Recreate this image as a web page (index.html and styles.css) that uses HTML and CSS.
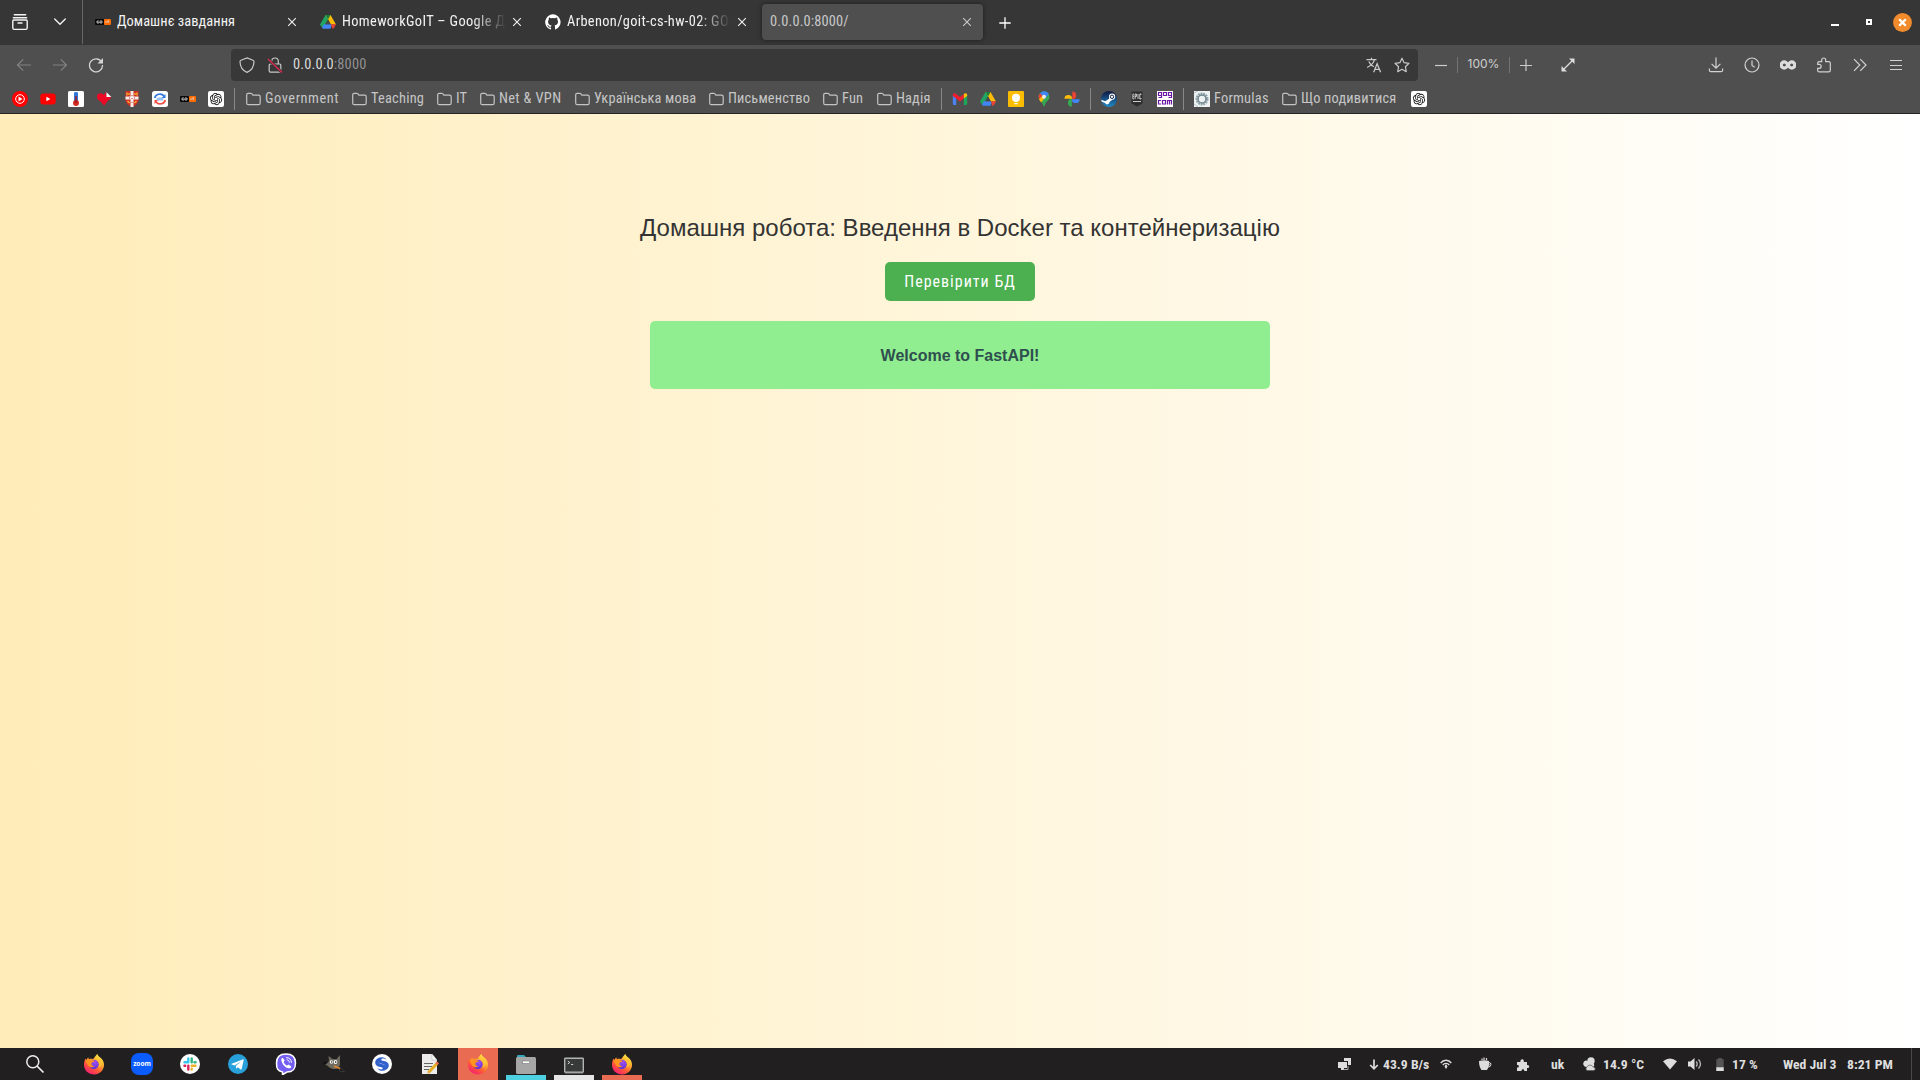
FILE: index.html
```html
<!DOCTYPE html>
<html lang="uk">
<head>
<meta charset="utf-8">
<title>0.0.0.0:8000/</title>
<link rel="stylesheet" href="styles.css">
</head>
<body>
<svg class="sprite" aria-hidden="true">
  <defs>
    <linearGradient id="ff-body" x1=".85" y1="0" x2=".2" y2="1">
      <stop offset="0" stop-color="#fff44f"/><stop offset=".35" stop-color="#ffb02e"/><stop offset=".65" stop-color="#ff5a36"/><stop offset="1" stop-color="#f5157a"/>
    </linearGradient>
    <radialGradient id="ff-globe" cx=".6" cy=".3" r=".8">
      <stop offset="0" stop-color="#a04df5"/><stop offset="1" stop-color="#5331c7"/>
    </radialGradient>
    <linearGradient id="steam-bg" x1="0" y1="0" x2="0" y2="1">
      <stop offset="0" stop-color="#10173f"/><stop offset="1" stop-color="#1f8ac6"/>
    </linearGradient>
    <symbol id="firefox" viewBox="0 0 22 22">
      <path d="M14.3.8c.4 1.700 1.500 2.600 2.600 3.500 2.600 1.900 4.100 4.300 4.100 7.400 0 5.500-4.400 9.700-10 9.700S1 17.200 1 11.700c0-2.400.6-4.500 1.700-6.200l.5 1.600L5.200 4.300l.7 1.900c1.400-.5 2.800-.5 4.100.1 1.400-1.700 2.900-3.500 4.300-5.500z" fill="url(#ff-body)"/>
      <circle cx="11" cy="11.500" r="4.700" fill="url(#ff-globe)"/>
      <path d="M2.700 7.500c1.400-1.600 4.100-1.800 6.200-.3 1.500.1 2.700.4 3.100.9-.7 1-2.900 1-3.500 2-.3 1.700.8 3 2.700 3.200-2.200 1.800-5.700.7-6.600-1.900-.7-.6-1.500-2-1.900-3.900z" fill="#ff9320"/>
      <path d="M12.300 6.500c4.200.5 5.500 5.200 2.700 8 2.300-.3 4-2.700 3.500-5.500-.7-2.500-2.800-3.900-6.200-2.500z" fill="#ffc336"/>
    </symbol>
    <symbol id="drive" viewBox="0 0 16 16">
      <path d="M5.500 1h2.700v4.200L4 12.500l-2 1L0 10.500z" fill="#1fa463"/><path d="M5.500 1h5L16 10.500h-5.200z" fill="#fbbc04"/><path d="M5.500 1h5L8 5.400z" fill="#188038"/><path d="M3.900 10.300H12l-1.500 4.500H3.500q-1 0-1.500-1z" fill="#4285f4"/><path d="M10.800 10.300H16l-2 3.700q-.6.800-1.500.8z" fill="#ea4335"/><path d="M8 5.400l2.800 4.900H5.200z" fill="#484848"/>
    </symbol>
    <symbol id="openai" viewBox="0 0 16 16">
      <rect width="16" height="16" rx="2" fill="#fff"/>
      <path transform="translate(1.900 1.900) scale(.51)" fill="#111" d="M22.2819 9.8211a5.9847 5.9847 0 0 0-.5157-4.9108 6.0462 6.0462 0 0 0-6.5098-2.9A6.0651 6.0651 0 0 0 4.9807 4.1818a5.9847 5.9847 0 0 0-3.9977 2.9 6.0462 6.0462 0 0 0 .7427 7.0966 5.98 5.98 0 0 0 .511 4.9107 6.051 6.051 0 0 0 6.5146 2.9001A5.9847 5.9847 0 0 0 13.2599 24a6.0557 6.0557 0 0 0 5.7718-4.2058 5.9894 5.9894 0 0 0 3.9977-2.9001 6.0557 6.0557 0 0 0-.7475-7.0729zm-9.022 12.6081a4.4755 4.4755 0 0 1-2.8764-1.0408l.1419-.0804 4.7783-2.7582a.7948.7948 0 0 0 .3927-.6813v-6.7369l2.02 1.1686a.071.071 0 0 1 .038.052v5.5826a4.504 4.504 0 0 1-4.4945 4.4944zm-9.6607-4.1254a4.4708 4.4708 0 0 1-.5346-3.0137l.142.0852 4.783 2.7582a.7712.7712 0 0 0 .7806 0l5.8428-3.3685v2.3324a.0804.0804 0 0 1-.0332.0615L9.74 19.9502a4.4992 4.4992 0 0 1-6.1408-1.6464zM2.3408 7.8956a4.485 4.485 0 0 1 2.3655-1.9728V11.6a.7664.7664 0 0 0 .3879.6765l5.8144 3.3543-2.0201 1.1685a.0757.0757 0 0 1-.071 0l-4.8303-2.7865A4.504 4.504 0 0 1 2.3408 7.872zm16.5963 3.8558L13.1038 8.364 15.1192 7.2a.0757.0757 0 0 1 .071 0l4.8303 2.7913a4.4944 4.4944 0 0 1-.6765 8.1042v-5.6772a.79.79 0 0 0-.407-.667zm2.0107-3.0231l-.142-.0852-4.7735-2.7818a.7759.7759 0 0 0-.7854 0L9.409 9.2297V6.8974a.0662.0662 0 0 1 .0284-.0615l4.8303-2.7866a4.4992 4.4992 0 0 1 6.6802 4.66zM8.3065 12.863l-2.02-1.1638a.0804.0804 0 0 1-.038-.0567V6.0742a4.4992 4.4992 0 0 1 7.3757-3.4537l-.142.0805L8.704 5.459a.7948.7948 0 0 0-.3927.6813zm1.0976-2.3654l2.602-1.4998 2.6069 1.4998v2.9994l-2.5974 1.4997-2.6067-1.4997Z"/>
    </symbol>
    <symbol id="goit" viewBox="0 0 16 16">
      <rect y="5" width="9" height="6" rx="1" fill="#080808"/><rect x="9" y="5" width="7" height="6" rx="1" fill="#ff6c00"/>
      <path d="M2 7h2M2 7v2h2V8M5 7h2v2H5zM11 7v2M12.200 7h2M13.200 7v2" fill="none" stroke="#ddd" stroke-width=".8"/>
    </symbol>
    <symbol id="folder" viewBox="0 0 15 16">
      <path d="M.7 12V3.700q0-1.400 1.400-1.400h2.600q.6 0 1 .4l1.200 1.400h5.700q1.600 0 1.600 1.600V12q0 1.600-1.600 1.600H2.300Q.7 13.600.7 12z" fill="none" stroke="#c4c4c4" stroke-width="1.200"/>
    </symbol>
    <symbol id="close" viewBox="0 0 10 10"><path d="M1.200 1.200l7.600 7.600M8.800 1.200L1.200 8.800" stroke="currentColor" stroke-width="1.100"/></symbol>
  </defs>
</svg>

<header class="browser">
  <div class="tabbar">
    <div class="tab-tools">
      <svg class="i18" viewBox="0 0 18 18"><path d="M3.300 1.800h11.400M2.300 4.700h13.400M2.800 7h12.400q1 0 1 1v7q0 1.400-1.400 1.400H3.200Q1.800 16.400 1.800 15V8q0-1 1-1zM7 10h4" fill="none" stroke="#f4f4f4" stroke-width="1.400" stroke-linecap="round"/></svg>
      <svg class="chev" viewBox="0 0 12 8"><path d="M.7 1l5.300 5.300L11.300 1" fill="none" stroke="#f4f4f4" stroke-width="1.300" stroke-linecap="round"/></svg>
    </div>
    <div class="tab">
      <svg class="i16"><use href="#goit"/></svg>
      <span class="tab-title t1">Домашнє завдання</span>
      <svg class="x"><use href="#close"/></svg>
    </div>
    <div class="tab">
      <svg class="i16"><use href="#drive"/></svg>
      <span class="tab-title fade t2 lat">HomeworkGoIT – Google Диск</span>
      <svg class="x"><use href="#close"/></svg>
    </div>
    <div class="tab">
      <svg class="i16" viewBox="0 0 16 16"><path d="M8 .3a7.800 7.800 0 0 0-2.500 15.200c.4.100.5-.2.500-.4v-1.500c-2.100.5-2.600-.9-2.600-.9-.4-.9-.9-1.100-.9-1.100-.7-.5.100-.5.100-.5.800.1 1.200.8 1.200.8.700 1.200 1.800.9 2.300.7.100-.5.300-.9.500-1.100-1.700-.2-3.500-.9-3.500-3.900 0-.8.300-1.500.8-2.100-.1-.2-.3-1 .1-2 0 0 .6-.2 2.100.8a7.300 7.300 0 0 1 3.900 0c1.500-1 2.100-.8 2.100-.8.400 1 .2 1.800.1 2 .5.600.8 1.300.8 2.100 0 3-1.800 3.700-3.500 3.900.3.200.5.700.5 1.400v2.100c0 .2.100.5.500.4A7.800 7.800 0 0 0 8 .3z" fill="#fff"/></svg>
      <span class="tab-title fade t3 lat">Arbenon/goit-cs-hw-02: GOIT</span>
      <svg class="x"><use href="#close"/></svg>
    </div>
    <div class="tab active">
      <span class="tab-title t4">0.0.0.0:8000/</span>
      <svg class="x"><use href="#close"/></svg>
    </div>
    <svg class="plus" viewBox="0 0 12 12"><path d="M6 .3v11.400M.3 6h11.400" stroke="#fff" stroke-width="1.300"/></svg>
    <div class="win">
      <svg class="w8" viewBox="0 0 8 8"><path d="M0 7h8" stroke="#fff" stroke-width="2"/></svg>
      <svg class="w6" viewBox="0 0 6 6"><path d="M1 1h4v4H1z" fill="none" stroke="#fff" stroke-width="2"/></svg>
      <svg class="w19" viewBox="0 0 19 19"><circle cx="9.500" cy="9.500" r="9.400" fill="#f28b2c"/><path d="M6.200 6.200l6.600 6.600M12.800 6.200l-6.600 6.600" stroke="#fff" stroke-width="2.300"/></svg>
    </div>
  </div>

  <div class="navbar">
    <div class="nav-left">
      <svg class="i16 dim" viewBox="0 0 16 16"><path d="M15 8H1.500M7.200 2.300L1.500 8l5.700 5.700" fill="none" stroke="currentColor" stroke-width="1.200"/></svg>
      <svg class="i16 dim" viewBox="0 0 16 16"><path d="M1 8h13.500M8.800 2.300L14.500 8l-5.700 5.700" fill="none" stroke="currentColor" stroke-width="1.200"/></svg>
      <svg class="i16" viewBox="0 0 16 16"><path d="M13.700 5.200A6.500 6.500 0 1 0 14.500 8" fill="none" stroke="#d5d5d5" stroke-width="1.300"/><path d="M15 1v5.500H9.500z" fill="#d5d5d5"/></svg>
    </div>
    <div class="urlbar">
      <svg class="i16" viewBox="0 0 16 16"><path d="M8 .9l6 2.300c.8.300 1 .7 1 1.400-.1 5-2.200 8.900-7 10.800C3.200 13.500 1.100 9.600 1 4.600c0-.7.200-1.100 1-1.400z" fill="none" stroke="#c8c8c8" stroke-width="1.200"/></svg>
      <svg class="i16 lock" viewBox="0 0 16 16"><path d="M4.700 7V4.300a3.300 3.300 0 0 1 6.600 0V7M3.200 7h9.600q1 0 1 1v6q0 1.200-1.200 1.200H3.400q-1.200 0-1.200-1.200V8q0-1 1-1z" fill="none" stroke="#c8c8c8" stroke-width="1.200"/><path d="M1 2l14 13.500" stroke="#383838" stroke-width="3"/><path d="M1 2l14 13.500" stroke="#e22850" stroke-width="1.300"/></svg>
      <span class="url">0.0.0.0<span class="port">:8000</span></span>
      <svg class="i16 translate" viewBox="0 0 16 16"><path d="M.5 2.700h10M5.500.8v1.900M8.500 2.700c-.8 3.100-3.500 6-7.400 7.800M2.800 4.500c1 2.300 2.700 4 5 5.300M7.700 15.200l3.400-8.500 3.500 8.500M8.900 12.400h4.600" fill="none" stroke="#c8c8c8" stroke-width="1.300"/></svg>
      <svg class="i16" viewBox="0 0 16 16"><path d="M8 1.200l2.100 4.500 4.900.6-3.600 3.400.9 5L8 12.300l-4.300 2.400.9-5L1 6.300l4.900-.6z" fill="none" stroke="#c8c8c8" stroke-width="1.200" stroke-linejoin="round"/></svg>
    </div>
    <div class="zoom">
      <svg class="z12" viewBox="0 0 12 12"><path d="M0 6.500h12" stroke="#ccc" stroke-width="1.200"/></svg>
      <i class="sep"></i>
      <span class="pct">100%</span>
      <i class="sep"></i>
      <svg class="z12" viewBox="0 0 12 12"><path d="M6 .3v11.700M0 6.500h12" stroke="#ccc" stroke-width="1.200"/></svg>
    </div>
    <svg class="expand" viewBox="0 0 14 14"><path d="M3 11l8-8" stroke="#ddd" stroke-width="1.300"/><path d="M8 .5h5.500V6zM.5 8v5.500H6z" fill="#ddd"/></svg>
    <div class="nav-right">
      <svg class="i16" viewBox="0 0 16 16"><path d="M8 .5v10.500M3.600 6.800L8 11.200l4.400-4.400M1.400 11.500v1.700q0 1.500 1.500 1.500h10.200q1.500 0 1.500-1.500v-1.700" fill="none" stroke="#d2d2d2" stroke-width="1.200"/></svg>
      <svg class="i16" viewBox="0 0 16 16"><circle cx="8" cy="8" r="7" fill="none" stroke="#d2d2d2" stroke-width="1.200"/><path d="M8 3.500v5l2.700 1.800" fill="none" stroke="#d2d2d2" stroke-width="1.200"/></svg>
      <svg class="i16" viewBox="0 0 16 16"><path d="M8 8C6.600 5.800 5.600 4.900 4.300 4.900a3 3 0 0 0 0 6.200C5.600 11.100 6.600 10.200 8 8s2.400-3.100 3.700-3.100a3 3 0 0 1 0 6.200C10.400 11.100 9.400 10.200 8 8z" fill="none" stroke="#ddd" stroke-width="3.200"/></svg>
      <svg class="i16" viewBox="0 0 16 16"><path d="M5.700 4.700V3a2 2 0 0 1 4 0v1.700h3q1.600 0 1.600 1.600v7q0 1.600-1.600 1.600H3.200q-1.500 0-1.500-1.500v-2.100h1.500a2 2 0 0 0 0-4H1.700V6.200q0-1.500 1.500-1.500z" fill="none" stroke="#d2d2d2" stroke-width="1.200"/></svg>
      <svg class="i16" viewBox="0 0 16 16"><path d="M2 2.200L7.800 8 2 13.800M8.200 2.200L14 8l-5.800 5.800" fill="none" stroke="#d2d2d2" stroke-width="1.200"/></svg>
      <svg class="i16" viewBox="0 0 16 16"><path d="M2 3.500h12M2 8.500h12M2 12.500h12" stroke="#d2d2d2" stroke-width="1.200"/></svg>
    </div>
  </div>

  <nav class="bookmarks">
    <div class="favs">
      <svg class="i16" viewBox="0 0 16 16"><circle cx="8" cy="8" r="8" fill="#f00"/><circle cx="8" cy="8" r="4.300" fill="none" stroke="#fff"/><path d="M6.500 5.500v5l4-2.500z" fill="#fff"/></svg>
      <svg class="i16" viewBox="0 0 16 16"><rect x=".3" y="2.500" width="15.400" height="11" rx="3" fill="#f00"/><path d="M6.400 5.700v4.600l4-2.300z" fill="#fff"/></svg>
      <svg class="i16" viewBox="0 0 16 16"><rect width="16" height="16" rx="1.500" fill="#fff"/><path d="M6 2q0-1 2-1t2 1v8H6z" fill="#3178d8"/><circle cx="8" cy="12" r="3" fill="#d22d20"/><path d="M8 5v7" stroke="#a21420" stroke-width="1.500"/></svg>
      <svg class="i16" viewBox="0 0 16 16"><path d="M1 5.500C1 2 5 1 8 4c.5-1.800 1.800-2.500 2.500-2.500V6H15c0 2-2 2.700-3 3.500L8.200 14.500 4 10C2 9 1 7.800 1 5.500z" fill="#ee0a25"/><path d="M10.500 1.200L15.300 6h-4.800z" fill="#fff"/></svg>
      <svg class="i16" viewBox="0 0 16 16"><path d="M1.500 0h13v9q0 4.500-6.500 7-6.500-2.500-6.500-7z" fill="#cf2f28"/><path d="M8 0v16M1.500 7h13" stroke="#f6ede9" stroke-width="3"/><path d="M3 1.500v3M5 2v2M11 2v2M13 1.500v3M3.500 10l2 2M12.500 10l-2 2" stroke="#f0b92c" stroke-width="1.300"/><path d="M8 4v1M8 7v1M8 11v1M5 7h1M10 7h1" stroke="#bb3b4c"/></svg>
      <svg class="i16" viewBox="0 0 16 16"><rect width="16" height="16" rx="2.500" fill="#fff"/><path d="M2.800 7C3.500 2.800 9.500 1.800 12 5" fill="none" stroke="#3476dc" stroke-width="1.700"/><path d="M13.500 3v4H9.500z" fill="#3476dc"/><path d="M13.200 9C12.500 13.200 6.500 14.200 4 11" fill="none" stroke="#ef5147" stroke-width="1.700"/><path d="M2.500 13V9h4z" fill="#ef5147"/><rect x="4.500" y="6.500" width="7" height="3" rx="1.500" fill="#9bc2f7"/></svg>
      <svg class="i16"><use href="#goit"/></svg>
      <svg class="i16"><use href="#openai"/></svg>
    </div>
    <i class="bsep"></i>
    <div class="folders">
      <a class="bm"><svg class="fold"><use href="#folder"/></svg><span class="wide">Government</span></a>
      <a class="bm"><svg class="fold"><use href="#folder"/></svg><span class="snug">Teaching</span></a>
      <a class="bm"><svg class="fold"><use href="#folder"/></svg><span class="snug">IT</span></a>
      <a class="bm"><svg class="fold"><use href="#folder"/></svg><span class="lat">Net &amp; VPN</span></a>
      <a class="bm"><svg class="fold"><use href="#folder"/></svg><span>Українська мова</span></a>
      <a class="bm"><svg class="fold"><use href="#folder"/></svg><span>Письменство</span></a>
      <a class="bm"><svg class="fold"><use href="#folder"/></svg><span>Fun</span></a>
      <a class="bm"><svg class="fold"><use href="#folder"/></svg><span>Надія</span></a>
    </div>
    <i class="bsep wideset"></i>
    <div class="favs google">
      <svg class="i16" viewBox="0 0 16 16"><path d="M.8 4l3.400 2.500V14H2q-1.200 0-1.200-1.200z" fill="#4b82ef"/><path d="M11.800 6.500L15.200 4v8.800q0 1.200-1.200 1.200h-2.200z" fill="#1da65a"/><path d="M.8 4.200c0-2 2-2.400 3.400-1.200L8 6l3.800-3v4.500L8 10.500 4.200 7.500.8 5z" fill="#ef1f30"/><path d="M11.800 3c1.400-1.200 3.400-.8 3.400 1.200V5l-3.400 2.500z" fill="#fbbc04"/></svg>
      <svg class="i16"><use href="#drive"/></svg>
      <svg class="i16" viewBox="0 0 16 16"><rect width="16" height="16" rx="1" fill="#fcbd00"/><circle cx="8" cy="6.700" r="4" fill="#fff"/><path d="M6.300 9h3.400v2H6.300zM6.300 12h3.400v1.200H6.300z" fill="#fff"/></svg>
      <svg class="i16" viewBox="0 0 16 16"><path d="M8 .3A5.500 5.500 0 0 1 13.400 6c0 3.300-4 4.500-4.600 8.600q-.8 2-1.600 0C6.600 10.500 2.600 9.300 2.600 6A5.500 5.500 0 0 1 8 .3z" fill="#34a853"/><path d="M8 .3c2.200 0 4 1.100 4.900 3L8 8.500 4 2.500Q5.700.3 8 .3z" fill="#4285f4"/><path d="M4 2.400L7 5 3.200 8.600Q1.800 5 4 2.400z" fill="#ea4335"/><path d="M8 8l-2.800 3.500L3 8.500 6.500 4.700z" fill="#fbbc04"/><circle cx="8" cy="5.800" r="2" fill="#ececec"/></svg>
      <svg class="i16" viewBox="0 0 16 16"><path d="M8.300 .4a3.900 3.900 0 0 1 0 7.800z" fill="#ea4335"/><path d="M15.600 8.200a3.900 3.900 0 0 1-7.800 0z" fill="#4285f4"/><path d="M7.800 15.600a3.900 3.900 0 0 1 0-7.800z" fill="#34a853"/><path d="M.4 7.800a3.900 3.900 0 0 1 7.800 0z" fill="#fbbc04"/></svg>
    </div>
    <i class="bsep"></i>
    <div class="favs games">
      <svg class="i16" viewBox="0 0 16 16"><circle cx="8" cy="8" r="8" fill="url(#steam-bg)"/><path d="M.2 8.700l4 1.600L8 7.800V5.700a3.100 3.100 0 1 1 3.300 3.100L8.500 11a2.300 2.300 0 0 1-4.400 1L.8 10.700z" fill="#fff"/><circle cx="11" cy="5.800" r="1.700" fill="#fff" stroke="#172951"/></svg>
      <svg class="i16" viewBox="0 0 16 16"><path d="M2.500.5h11v12L8 15.600l-5.500-3.100z" fill="#2e2e2e"/><path d="M4.800 3H3.900v5h.9M3.900 5.400h.9M6.100 8V3h1.300v2.500H6.100M9 3v5M12 4V3h-1.200v5H12V7M4 10.500h8" stroke="#ddd" fill="none" stroke-width=".9"/></svg>
      <svg class="i16" viewBox="0 0 16 16"><path d="M0 0h16v16H0z" fill="#fff"/><path d="M4.500 4.500h-3v-3h3v5h-3M6.500 1.500h3v3h-3zM14.500 4.500h-3v-3h3v5h-3M4 9.500H1.500V13H4M5.500 9.500h3V13h-3zM10.500 13.500v-4h4v4M12.500 9.500v4" fill="none" stroke="#6a18a5" stroke-width="1.200"/></svg>
    </div>
    <i class="bsep"></i>
    <div class="folders last">
      <a class="bm"><svg class="i16" viewBox="0 0 16 16"><path d="M0 0h16v16H0z" fill="#eef2f3"/><circle cx="8" cy="8" r="5" fill="none" stroke="#8ba0a7" stroke-width="3" stroke-dasharray="1.700 .7"/><circle cx="8" cy="8" r="4" fill="none" stroke="#75898f" stroke-width="1.500"/><path d="M0 2l4-2M0 13l4 3" stroke="#b9c5c9"/></svg><span class="snug">Formulas</span></a>
      <a class="bm"><svg class="fold"><use href="#folder"/></svg><span>Що подивитися</span></a>
      <svg class="i16"><use href="#openai"/></svg>
    </div>
  </nav>
</header>

<main class="page">
  <h1>Домашня робота: Введення в Docker та контейнеризацію</h1>
  <button class="check" type="button">Перевірити БД</button>
  <div class="result">Welcome to FastAPI!</div>
</main>

<footer class="taskbar">
  <div class="cell search"><svg class="a20" viewBox="0 0 20 20"><circle cx="7.800" cy="7.800" r="6" fill="none" stroke="#eee" stroke-width="1.500"/><path d="M12 12l6.500 6.500" stroke="#eee" stroke-width="1.700"/></svg></div>
  <div class="cell"><svg class="a22"><use href="#firefox"/></svg></div>
  <div class="cell"><svg class="a22" viewBox="0 0 22 22"><rect width="22" height="22" rx="8" fill="#0b5cff"/><text x="11" y="13" class="zoomtxt">zoom</text></svg></div>
  <div class="cell"><svg class="a20" viewBox="0 0 20 20"><circle cx="10" cy="10" r="10" fill="#fff"/><g fill="none" stroke-width="2.400" stroke-linecap="round"><path d="M8.300 4.500v3.700M4.500 8.300h3.700" stroke="#36c5f0"/><path d="M11.700 4.500v3.700M15.500 8.300h-1" stroke="#2eb67d"/><path d="M11.700 11.700h3.800M11.700 15.500v-.7" stroke="#ecb22e"/><path d="M8.300 11.700v3.800M4.500 11.700h.7" stroke="#e01e5a"/></g></svg></div>
  <div class="cell"><svg class="a20" viewBox="0 0 20 20"><circle cx="10" cy="10" r="10" fill="#28a0da"/><path d="M3.700 9.800l11-4.400c.7-.2 1.100.1.900 1l-1.900 8.500c-.1.700-.6.800-1.100.5l-2.800-2.100-1.600 1.500-.4-2.800 5-4.500-6.200 3.900-2.800-.9c-.7-.2-.7-.5-.1-.7z" fill="#fff"/></svg></div>
  <div class="cell"><svg class="a22" viewBox="0 0 22 22"><path d="M11 1c6.500 0 9.500 2.500 9.500 9s-2.500 9-8.500 9l-4.500 2.700V19C2.500 18 1.500 15.500 1.500 10c0-6.500 3-9 9.500-9z" fill="#7360f2" stroke="#fff" stroke-width="1.500"/><path d="M6.500 5.500l1.200-.7 2 2.800-1 1.500c.6 1.800 1.800 3 3.500 3.500l1.400-1.100 2.800 2-.8 1.400c-4.500 2-10.500-5.500-9.100-9.400z" fill="#fff"/><path d="M11.500 4.600c3 .1 4.700 1.800 4.900 4.800M12 6.800c1.400.1 2.200 1 2.300 2.400" fill="none" stroke="#fff" stroke-linecap="round"/></svg></div>
  <div class="cell"><svg class="a22" viewBox="0 0 22 22"><path d="M.5 10.500C3 12 5 10.500 6 7.500L5.500 3l4 3 4 .3L17 2v8c.5 4-3 6.500-6.500 6-4-.3-5-3.500-10-5.500z" fill="#6e6a5d"/><circle cx="8.500" cy="9" r="1.700" fill="#fff"/><circle cx="12.500" cy="9" r="1.900" fill="#fff"/><circle cx="8.800" cy="9" r=".7"/><circle cx="12.700" cy="9" r=".8"/><circle cx="1.800" cy="10" r="1.400" fill="#111"/><path d="M11 13l7 3" stroke="#e3872d" stroke-width="1.700"/><path d="M17 14.500l4.500 4.500-4.500-1z" fill="#090909" stroke="#777" stroke-width=".4"/></svg></div>
  <div class="cell"><svg class="a20" viewBox="0 0 20 20"><circle cx="10" cy="10" r="10" fill="#fff"/><path d="M14.700 6C13.500 3.800 11.500 3 9.500 3.200 5.500 3.700 4.500 8 8 9.300c2.500 1 5.500.8 5.500 3.700 0 1.500-.8 2.500-2 3.500 4.500-.6 6.500-4.500 4.500-7.500C14 6.300 9 7.700 9.300 5.500c.4-1.500 3.500-1 5.400.5z" fill="#3361cc"/><path d="M5.300 14c1.200 2.200 3.200 3 5.200 2.800 4-.5 5-4.800 1.500-6.100-2.500-1-5.500-.8-5.500-3.700 0-1.500.8-2.500 2-3.500C4 4.100 2 8 4 11c2 2.700 7 1.300 6.700 3.500-.4 1.500-3.500 1-5.400-.5z" fill="#3361cc"/></svg></div>
  <div class="cell"><svg class="a20" viewBox="0 0 20 20"><path d="M2 0h10l5 6v14H2z" fill="#ececec"/><path d="M12 0v6h5z" fill="#fff" stroke="#aaa" stroke-width=".5"/><path d="M4 9.500h9M4 12.500h8M4 15.500h5" stroke="#666" stroke-width="1.200"/><path d="M8.500 18.500l8.500-9" stroke="#e5ae23" stroke-width="3"/><path d="M16.500 10l1.500-1.600" stroke="#e76850" stroke-width="3"/><path d="M7 20l.8-3 2.200 2z" fill="#deb57a"/></svg></div>
  <div class="cell current"><svg class="a22"><use href="#firefox"/></svg></div>
  <div class="cell run cyan"><svg class="a20" viewBox="0 0 20 20"><path d="M1 6V2q0-1 1-1h6l2 2h8q1 0 1 1v3z" fill="#35a5b7"/><rect y="3" width="20" height="17" rx="1.500" fill="#a6a6a6"/><rect x="6.500" y="7" width="7" height="2.500" fill="#fff" stroke="#777" stroke-width=".6"/></svg></div>
  <div class="cell run white"><svg class="a20" viewBox="0 0 20 20"><rect x=".7" y="4.200" width="18.600" height="14" rx=".7" fill="#383a3a" stroke="#b1b5b2" stroke-width="1.400"/><path d="M3.800 7l2 1.500-2 1.500M7 10.500h2.200" fill="none" stroke="#ddd" stroke-width=".9"/><path d="M1 19.300h18" stroke="#686868"/></svg></div>
  <div class="cell run red"><svg class="a22"><use href="#firefox"/></svg></div>

  <div class="tray">
    <svg class="s14" viewBox="0 0 14 14"><path d="M6 1h7v7h-3V4H6z" fill="#ddd"/><path d="M0 5h9v6H6v2H3v-2H0z" fill="#ddd"/><path d="M5.500 12.500H10V9" fill="none" stroke="#aaa"/></svg>
    <svg class="s10" viewBox="0 0 10 12"><path d="M5 1v9M1.200 6.500L5 10.300l3.800-3.800" fill="none" stroke="#ddd" stroke-width="1.700"/></svg>
    <span>43.9 B/s</span>
    <svg class="s12" viewBox="0 0 12 12"><path d="M.7 5C3.500 1.300 8.500 1.300 11.300 5M2.800 7c1.600-2.200 4.800-2.200 6.400 0" fill="none" stroke="#ddd" stroke-width="1.400"/><path d="M4.500 8.500L6 6l1.500 2.500L6 11z" fill="#ddd"/></svg>
    <svg class="s14" viewBox="0 0 14 14"><path d="M1 4q5.500-1.500 10 0v1.200c3.500-.2 3 5-.6 5.200L9 13H3.500Q1 10 1 4z" fill="#ddd"/><path d="M4 3V1.500M6 3V.5M8.500 3V1" stroke="#ddd" stroke-width="1.200"/><path d="M11 6.500c1.500 0 1.300 2-.3 2.500" stroke="#211f20" fill="none"/></svg>
    <svg class="s13" viewBox="0 0 13 13"><path d="M0 4h3.500C2.500 1 7 0 6.800 3v1H10v3c3-.6 3 3.700 0 3v3H7.200c.4-2.500-3-2.500-2.700 0H0v-3.500c2.500.5 2.500-3 0-2.500z" fill="#ddd"/></svg>
    <span>uk</span>
    <svg class="s14" viewBox="0 0 14 14"><circle cx="8" cy="4" r="3.700" fill="#ddd"/><path d="M3.500 10a3.200 3.200 0 1 1 1.500-6c4 .4 4 2 5 2a2.600 2.600 0 0 1 .5 4z" fill="#ddd"/><path d="M4 13.500a2 2 0 0 1 0-3.500c1-2.500 5-2.500 6 0 3 .3 2.600 3.500.5 3.500z" fill="#ddd" stroke="#555" stroke-width=".7"/></svg>
    <span>14.9 °C</span>
    <svg class="s14" viewBox="0 0 14 14"><path d="M0 4.300Q7-1.500 14 4.300L7 12.500z" fill="#ddd"/></svg>
    <svg class="s14" viewBox="0 0 14 14"><path d="M0 4.500h2.500L6.500 1v12l-4-3.500H0z" fill="#ddd"/><path d="M8.200 4.500q2 2.500 0 5M10.500 2.500q4 4.500 0 9" fill="none" stroke="#bbb" stroke-width="1.300"/></svg>
    <svg class="s10" viewBox="0 0 10 14"><path d="M3 0h4v1.300h2V14H1V1.300h2z" fill="#555"/><path d="M1 10h8v4H1z" fill="#ddd"/></svg>
    <span>17 %</span>
    <span>Wed Jul 3</span>
    <span>8:21 PM</span>
    <i class="edge"></i>
  </div>
</footer>
</body>
</html>
```
FILE: styles.css
```css
* { box-sizing: border-box; }

body {
  margin: 0;
  width: 1920px;
  height: 1080px;
  overflow: hidden;
  display: flex;
  flex-direction: column;
  font-family: Roboto, "Open Sans", sans-serif;
  font-stretch: 75%;
  font-size: 14.4px;
  line-height: 18px;
}

svg { display: block; flex: none; }
.sprite { position: absolute; width: 0; height: 0; }
span { white-space: nowrap; }

.i16 { width: 16px; height: 16px; }
.i18 { width: 18px; height: 18px; }
.a20 { width: 20px; height: 20px; }
.a22 { width: 22px; height: 22px; }

/* Browser chrome */
.browser {
  height: 114px;
  flex: none;
  background: #4f4f4f;
  border-bottom: 1px solid #242424;
  letter-spacing: .15px;
}
.lat { letter-spacing: .35px; }
.wide { letter-spacing: .55px; }
.snug { letter-spacing: .22px; }

.tabbar {
  height: 45px;
  display: flex;
  align-items: flex-start;
  background: #363636;
  color: #f2f2f2;
}

.tab-tools {
  width: 83px;
  height: 44px;
  padding: 0 16px 0 11px;
  display: flex;
  align-items: center;
  justify-content: space-between;
  border-right: 1px solid #676767;
}
.chev { width: 12px; height: 8px; }

.tab {
  height: 36px;
  margin-top: 4px;
  width: 221px;
  margin-right: 4px;
  padding: 0 8px;
  display: flex;
  align-items: center;
  gap: 6px;
}
.tab-tools + .tab { margin-left: 4px; }
.tab .x { width: 10px; height: 10px; margin-left: auto; margin-right: 3px; }
.tab-title { overflow: hidden; flex: none; padding-bottom: 1px; }
.t1 { width: 125px; letter-spacing: .05px; }
.t2 { width: 164px; }
.t3 { width: 164px; }
.fade { mask-image: linear-gradient(to right, #000 80%, transparent 100%); }
.tab:has(.fade) .x { margin-right: 0; margin-left: 0; }
.active { background: #4f4f4f; border-radius: 4px; box-shadow: 0 0 4px #0007; color: #c9c9c9; }

.plus { width: 12px; height: 12px; margin: 17px 0 0 12px; }

.win {
  margin-left: auto;
  height: 44px;
  display: flex;
  align-items: center;
  padding-right: 8px;
}
.w8 { width: 8px; height: 8px; margin-right: 27px; }
.w6 { width: 6px; height: 6px; margin-right: 21px; }
.w19 { width: 19px; height: 19px; }

.navbar {
  height: 40px;
  display: flex;
  align-items: center;
}
.nav-left { display: flex; gap: 20px; width: 231px; padding-left: 16px; }
.dim { color: #828282; }

.urlbar {
  width: 1187px;
  height: 32px;
  padding: 0 8px;
  display: flex;
  align-items: center;
  background: #383838;
  border-radius: 4px;
  color: #dcdcdc;
}
.lock { margin-left: 12px; }
.url { margin-left: 10px; }
.port { color: #929292; }
.translate { margin-left: auto; margin-right: 12px; }

.zoom { display: flex; align-items: center; margin-left: 17px; width: 97px; justify-content: space-between; }
.z12 { width: 12px; height: 12px; }
.sep { width: 1px; height: 16px; background: #737373; }
.pct { font: 12px/16px Inter, sans-serif; letter-spacing: 0; color: #cfcfcf; padding-bottom: 3px; }
.expand { width: 14px; height: 14px; margin-left: 29px; }
.nav-right { display: flex; gap: 20px; margin-left: auto; padding-right: 16px; }

.bookmarks {
  height: 28px;
  padding: 0 0 0 12px;
  display: flex;
  align-items: center;
  color: #c6c6c6;
}
.favs { display: flex; align-items: center; gap: 12px; }
.bsep { width: 1px; height: 22px; background: #898989; flex: none; margin-left: 10px; }
.wideset { margin-left: 11px; }
.folders { display: grid; grid-template-columns: 106px 85px 43px 95px 134px 114px 54px 53px; margin-left: 11px; align-items: center; }
.folders.last { grid-template-columns: 88px 129px 16px; margin-left: 10px; }
.bm { display: flex; align-items: center; gap: 4px; height: 20px; }
.bm span { padding-bottom: 1px; }
.fold { width: 15px; height: 16px; }
.google { margin-left: 10px; }
.games { margin-left: 10px; }

/* Web page */
.page {
  flex: 1;
  min-height: 0;
  padding-top: 100px;
  display: flex;
  flex-direction: column;
  align-items: center;
  background: linear-gradient(to right, #ffecb8, #fff);
  font-family: "Liberation Sans", Arial, sans-serif;
  font-stretch: 100%;
}
h1 { margin: 0; font-size: 24px; font-weight: 400; line-height: 28px; color: #333; }
.check {
  margin-top: 20px;
  width: 150px;
  height: 39px;
  border: 0;
  border-radius: 5px;
  background: #4caf50;
  color: #fff;
  font: 16px Roboto, sans-serif;
  font-stretch: 75%;
  letter-spacing: 1px;
  padding: 0;
}
.result {
  margin-top: 20px;
  width: 620px;
  height: 68px;
  padding-top: 1px;
  display: flex;
  align-items: center;
  justify-content: center;
  background: #90ee90;
  border-radius: 5px;
  color: #2f4f4f;
  font-size: 16px;
  font-weight: 700;
}

/* Desktop panel */
.taskbar {
  height: 32px;
  flex: none;
  display: flex;
  gap: 8px;
  padding-left: 15px;
  background: #211f20;
  color: #dedede;
}
.cell { width: 40px; height: 32px; flex: none; display: flex; align-items: center; justify-content: center; }
.search { margin-right: 11px; }
.zoomtxt { font: 700 6.500px "Open Sans", sans-serif; fill: #fff; text-anchor: middle; }
.current { background: #e86b52; }
.run { border-bottom: 5px solid; }
.run svg { margin-top: 5px; }
.cyan { border-color: #4dd0e1; }
.white { border-color: #e6e6e6; }
.red { border-color: #e86b52; }

.tray {
  margin-left: auto;
  width: 582px;
  display: grid;
  grid-template-columns: 31px 14px 57px 38px 39px 34px 32px 20px 60px 25px 27px 17px 51px 64px 64px 9px;
  align-items: center;
  font-size: 13.700px;
  font-weight: 700;
}
.tray span { padding-bottom: 1px; }
.s14 { width: 14px; height: 14px; }
.s13 { width: 13px; height: 13px; }
.s12 { width: 12px; height: 12px; }
.s10 { width: 10px; height: 13px; }
.edge { width: 1px; height: 32px; background: #494949; }
```
